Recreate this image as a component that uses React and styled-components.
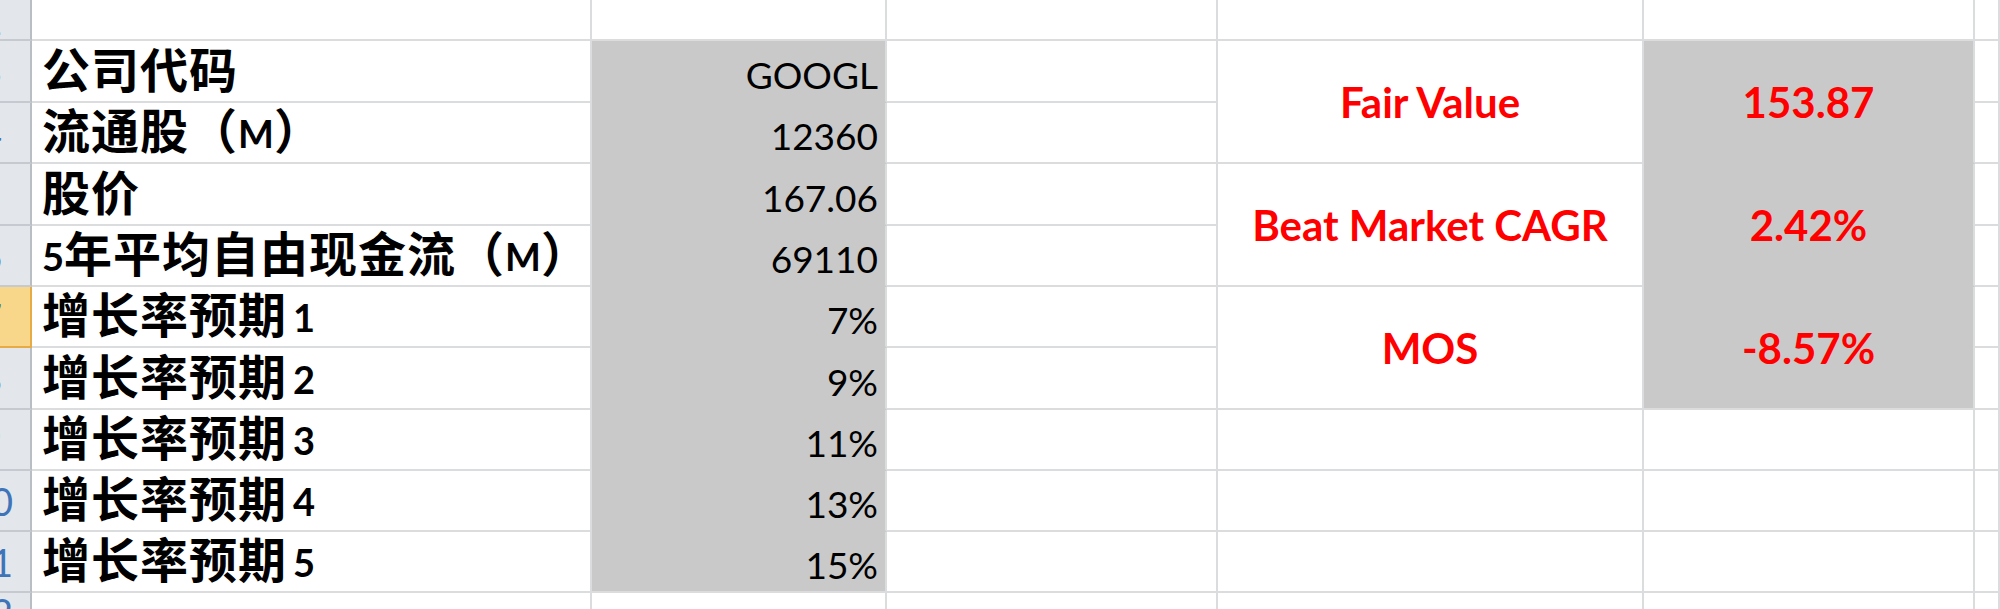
import React from "react";
import styled, { createGlobalStyle } from "styled-components";

const GRID = "#dadcdd";
const FILL = "#c9c9c9";

const GlobalStyle = createGlobalStyle`
  html, body {
    margin: 0;
    padding: 0;
    background: #fff;
  }
  body {
    width: 2000px;
    height: 609px;
    overflow: hidden;
  }
`;

const Sheet = styled.div`
  display: grid;
  grid-template-columns: 32px 560px 295px 331px 426px 331px 1fr;
  grid-template-rows: 41px 62px 61px 62px 61px 61px 62px 61px 61px 61px 40px;
  width: 2000px;
  height: 609px;
  overflow: hidden;
  background: #fff;
`;

const Cell = styled.div`
  box-sizing: border-box;
  min-width: 0;
  overflow: hidden;
  white-space: nowrap;
  display: flex;
  background: ${(p) => (p.$fill ? FILL : "#fff")};
  border-right: 2px solid ${GRID};
  border-bottom: 2px solid ${(p) => (p.$fill && !p.$last ? FILL : GRID)};
`;

const RowHead = styled(Cell)`
  background: ${(p) => (p.$selected ? "#f8d68a" : "#e3e7ec")};
  border-right: 2px solid ${(p) => (p.$selected ? "#e6ab45" : "#b9bec5")};
  border-bottom: 2px solid ${(p) => (p.$selected ? "#e6ab45" : "#c6cad0")};
  align-items: center;
`;

const RowNum = styled.div`
  flex: none;
  width: 74px;
  margin-left: -46px;
  text-align: center;
  font-family: Lato, "Liberation Sans", sans-serif;
  font-size: 38px;
  line-height: 1;
  color: #3f74b8;
`;

const Label = styled(Cell)`
  align-items: flex-end;
  padding: 0 0 10px 10px;
  font-family: "Noto Sans CJK SC", "Noto Sans", sans-serif;
  font-weight: 700;
  font-size: 48px;
  letter-spacing: 1px;
  line-height: 48px;
  color: #000;
`;

const Latin = styled.span`
  font-family: Lato, "Liberation Sans", sans-serif;
  font-weight: 700;
  font-size: 38px;
  line-height: 1;
  letter-spacing: 0;
  margin-left: ${(p) => (p.$gap ? "6px" : "0")};
`;

const Value = styled(Cell)`
  align-items: flex-end;
  justify-content: flex-end;
  padding: 0 7px 8px 0;
  font-family: Lato, "Liberation Sans", sans-serif;
  font-size: 37px;
  line-height: 1;
  color: #000;
`;

const Merged = styled(Cell)`
  grid-row: span 2;
  align-items: center;
  justify-content: center;
  font-family: Lato, "Liberation Sans", sans-serif;
  font-weight: 700;
  font-size: 42px;
  line-height: 1;
  color: #ff0000;
`;

const growth = (k, v, extra) => ({
  n: 6 + k,
  label: (
    <>
      增长率预期<Latin $gap>{k}</Latin>
    </>
  ),
  value: v,
  ...extra,
});

const rows = [
  { n: 2 },
  { n: 3, label: <>公司代码</>, value: "GOOGL" },
  { n: 4, label: <>流通股（<Latin>M</Latin>）</>, value: "12360" },
  { n: 5, label: <>股价</>, value: "167.06" },
  {
    n: 6,
    label: (
      <>
        <Latin>5</Latin>年平均自由现金流（<Latin>M</Latin>）
      </>
    ),
    value: "69110",
  },
  growth(1, "7%", { selected: true }),
  growth(2, "9%"),
  growth(3, "11%"),
  growth(4, "13%"),
  growth(5, "15%", { last: true }),
  { n: 12 },
];

const summary = {
  3: { title: "Fair Value", value: "153.87" },
  5: { title: "Beat Market CAGR", value: "2.42%" },
  7: { title: "MOS", value: "-8.57%", last: true },
};
const covered = [4, 6, 8];

function SummaryCells({ n }) {
  const item = summary[n];
  if (item) {
    return (
      <>
        <Merged>{item.title}</Merged>
        <Merged $fill $last={item.last}>
          {item.value}
        </Merged>
      </>
    );
  }
  if (covered.includes(n)) return null;
  return (
    <>
      <Cell />
      <Cell />
    </>
  );
}

export default function App() {
  return (
    <>
      <GlobalStyle />
      <Sheet>
        {rows.map((r) => (
          <React.Fragment key={r.n}>
            <RowHead $selected={r.selected}>
              <RowNum>{r.n}</RowNum>
            </RowHead>
            <Label>{r.label}</Label>
            <Value $fill={r.value != null} $last={r.last}>
              {r.value}
            </Value>
            <Cell />
            <SummaryCells n={r.n} />
            <Cell />
          </React.Fragment>
        ))}
      </Sheet>
    </>
  );
}
